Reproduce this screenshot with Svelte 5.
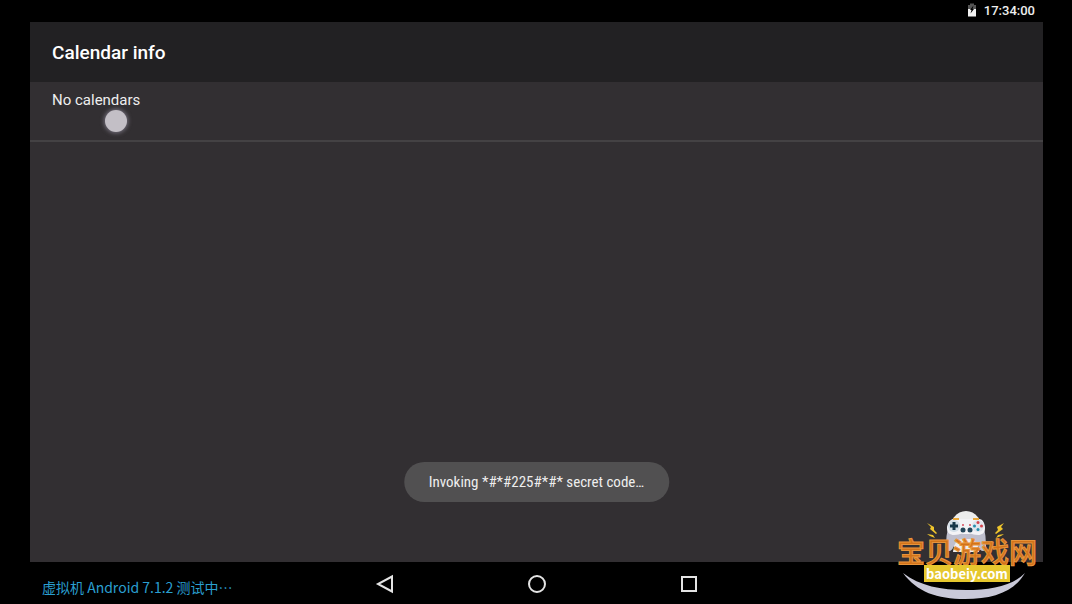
<script>
    let time = '17:34:00';
    let title = 'Calendar info';
    let rows = ['No calendars'];
    let toast = 'Invoking *#*#225#*#* secret code…';
</script>

<div class="device">
    <header class="status">
        <svg class="battery" width="10" height="14" viewBox="0 0 10 14" aria-hidden="true">
            <path d="M1 2h2V0.500h4V2h2v5H1z" fill="#555" />
            <path d="M1 6h8v7.500H1z" fill="#f2f2f2" />
            <path d="M6.500 2.500L3 7h1.500L3.500 10.500 7 6H5.500z" fill="#000" />
        </svg>
        <time>{time}</time>
    </header>

    <main class="window">
        <div class="appbar">
            <h1>{title}</h1>
        </div>
        <ul class="list">
            {#each rows as row}
                <li>{row}</li>
            {/each}
        </ul>
        <span class="touch"></span>
        <div class="toast" role="status">{toast}</div>
    </main>

    <footer class="bottom">
        <p class="notice" lang="zh-CN">虚拟机 Android 7.1.2 测试中…</p>
        <nav class="keys">
            <button aria-label="Back">
                <svg width="20" height="20" viewBox="0 0 20 20"><path d="M17 2.500v15L3 10z" /></svg>
            </button>
            <button aria-label="Home">
                <svg width="20" height="20" viewBox="0 0 20 20"><circle cx="10" cy="10" r="8" /></svg>
            </button>
            <button aria-label="Recent apps">
                <svg width="20" height="20" viewBox="0 0 20 20"><rect x="3" y="3" width="14" height="14" /></svg>
            </button>
        </nav>
    </footer>

    <div class="brand">
        <svg class="art" width="142" height="92" viewBox="0 0 142 92" aria-hidden="true">
            <ellipse cx="70" cy="22" rx="17" ry="21" fill="#ececec" />
            <path d="M52 18q-2 8-2 17-1 6 3 6 3 0 5-5 3-7 8-7h8q5 0 8 7 2 5 5 5 4 0 3-6 0-9-2-17z" fill="#bfbfcd" />
            <path d="M57 42q1-10 13-10t13 10z" fill="#f0eff0" />
            <path d="M58 9h25c4 0 6 5 6 9 0 5-3 7-7 7-5 0-6-2-9-1h-6c-3-1-4 1-9 1-4 0-7-2-7-7 0-4 3-9 7-9z" fill="#f3f3f6" />
            <path d="M57 9h6M77 9h6" stroke="#e9a83c" stroke-width="2" />
            <circle cx="58" cy="16" r="6" fill="#d3dfe8" />
            <path d="M58 12v8M54 16h8" stroke="#16384a" stroke-width="3" />
            <circle cx="82" cy="16" r="6" fill="#e0e4ec" />
            <g fill="#d5444c"><circle cx="82" cy="12.500" r="1.500" /><circle cx="85.500" cy="16" r="1.500" /></g>
            <g fill="#258fae"><circle cx="78.500" cy="16" r="1.500" /><circle cx="82" cy="19.500" r="1.500" /></g>
            <g fill="#23465a"><circle cx="67" cy="20" r="2.500" /><circle cx="74" cy="20" r="2.500" /></g>
            <g fill="#d94b5b"><circle cx="67" cy="15" r="1" /><circle cx="74" cy="15" r="1" /></g>
            <g fill="#efc52c">
                <path d="M31 13l7 4v3l3 3-1 1-6-5 1-2zM31 24l6 1 2 3-5-2z" />
                <path d="M108 13l-7 4 1 3-3 3 1 1 7-5-2-2zM108 24l-6 1-2 3 5-2z" />
            </g>
            <path d="M7 63C24 76 45 80 70 80s46-4 59-17C118 82 97 89 69 89S21 82 7 63z" fill="#c9c9d8" />
        </svg>
        <strong lang="zh-CN">宝贝游戏网</strong>
        <a href="#top">baobeiy.com</a>
    </div>
</div>

<style>
    :global(body) {
        margin: 0;
        background: #000;
    }
    .device {
        position: relative;
        display: flex;
        flex-direction: column;
        box-sizing: border-box;
        min-height: 100vh;
        padding: 0 29px 0 30px;
        overflow: hidden;
        background: #000;
        color: #eee;
        font-family: Roboto, "Noto Sans CJK SC", sans-serif;
    }
    .status {
        display: flex;
        align-items: center;
        justify-content: flex-end;
        gap: 7px;
        height: 20px;
        padding: 0 8px 2px;
        font-size: 13px;
        font-weight: 500;
    }
    .window {
        position: relative;
        flex: 1;
        background: #322f32;
    }
    .appbar {
        display: flex;
        align-items: center;
        height: 60px;
        padding: 0 22px;
        background: #222123;
    }
    h1 {
        margin: 0;
        color: #fff;
        font-size: 19px;
        font-weight: 500;
    }
    .list {
        margin: 0;
        padding: 0;
        list-style: none;
    }
    .list li {
        height: 50px;
        padding: 8px 22px 0;
        border-bottom: 2px solid #444244;
        font-size: 15px;
        line-height: 20px;
    }
    .touch {
        position: absolute;
        top: 88px;
        left: 75px;
        width: 22px;
        height: 22px;
        border-radius: 50%;
        background: #c3bfc6;
        box-shadow: 0 0 4px 1px #77727f;
    }
    .toast {
        position: absolute;
        bottom: 60px;
        left: 50%;
        transform: translateX(-50%);
        padding: 0 25px;
        border-radius: 20px;
        background: #515051;
        font-family: "Roboto Condensed", "Liberation Sans Narrow", Roboto, sans-serif;
        font-size: 15px;
        line-height: 40px;
        white-space: nowrap;
    }
    .bottom {
        position: relative;
        display: flex;
        align-items: center;
        justify-content: center;
        height: 42px;
    }
    .notice {
        position: absolute;
        left: 12px;
        margin: 0;
        padding-top: 8px;
        color: #2a9fd0;
        font-family: "Noto Sans CJK SC", sans-serif;
        font-size: 14px;
        line-height: 20px;
    }
    .keys {
        display: flex;
        gap: 132px;
        padding-top: 2px;
    }
    .keys button {
        display: flex;
        padding: 0;
        border: 0;
        background: none;
    }
    .keys svg {
        fill: none;
        stroke: #e4e4e4;
        stroke-width: 2;
    }
    .brand {
        position: absolute;
        right: 34px;
        bottom: 2px;
        display: flex;
        flex-direction: column;
        align-items: center;
        justify-content: flex-end;
        width: 142px;
        height: 92px;
    }
    .art {
        position: absolute;
        inset: 0;
    }
    .brand strong {
        position: relative;
        color: #d2731a;
        font-family: "Noto Sans CJK SC", sans-serif;
        font-size: 28px;
        font-weight: 500;
        line-height: 28px;
        white-space: nowrap;
        -webkit-text-stroke: 1px #e8943c;
    }
    .brand a {
        position: relative;
        margin-bottom: 20px;
        padding: 0 2px;
        background: #e6c72e;
        color: #fff;
        font-family: "Noto Sans CJK SC", sans-serif;
        font-size: 13px;
        font-weight: 700;
        line-height: 17px;
        text-decoration: none;
    }
</style>
